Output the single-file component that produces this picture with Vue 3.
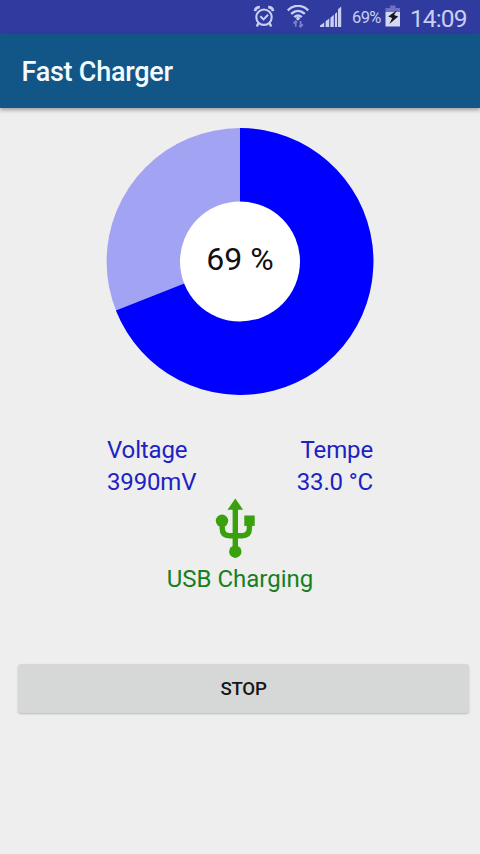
<script setup>
import { computed } from 'vue'

const level = 69
const radius = 133.4
const cx = 134
const cy = 134.5

const chargedPath = computed(() => {
  const angle = (level / 100) * Math.PI * 2
  const x = cx + radius * Math.sin(angle)
  const y = cy - radius * Math.cos(angle)
  const large = level > 50 ? 1 : 0
  return `M${cx} ${cy}V${cy - radius}A${radius} ${radius} 0 ${large} 1 ${x} ${y}Z`
})
</script>

<template>
  <div class="screen">
    <div class="status">
      <svg class="alarm" width="22" height="23" viewBox="0 0 22 23" fill="none" stroke="#c9cef3">
        <circle cx="11" cy="12.2" r="7.7" stroke-width="2.1" />
        <path d="M7.3 11.3l3.2 3.1 4.6-4.6" stroke-width="2" />
        <path d="M2 6.2C2.3 3.8 4 2.2 6.8 2.2M20 6.2C19.7 3.8 18 2.2 15.2 2.2" stroke-width="2.8" />
        <path d="M5.4 18.2l-1.6 3.4M16.6 18.2l1.6 3.4" stroke-width="2.4" />
      </svg>
      <svg class="wifi" width="24" height="25" viewBox="0 0 24 25" fill="none" stroke="#c9cef3">
        <path d="M1.8 5.4C7.8-.6 16.2-.6 22.2 5.4M5.2 8.9c4.2-4 9.4-4 13.6 0M8.3 12.2c2.4-2.2 5-2.2 7.4 0" stroke-width="2.4" />
        <circle cx="12" cy="13.6" r="1.8" fill="#c9cef3" stroke="none" />
        <path d="M9.7 21.8v-5.6M7.5 18.4l2.2-2.2 1.4 1.4M14.6 16v5.8M16.9 19.4l-2.3 2.4-1.4-1.5" stroke="#7e80d2" stroke-width="1.7" />
      </svg>
      <svg class="signal" width="22" height="22" viewBox="0 0 22 22" fill="#c9cef3">
        <path d="M0 21v-1.4l4.2-3V21zM5.6 21v-5.7l3.6-2.7V21zM10.4 21v-9.3l3.4-3V21zM14.9 21V7.9l2.2-2V21zM18 21V3.2L21.2.6V21z" />
      </svg>
      <span class="percent">{{ level }}%</span>
      <svg class="battery" width="16" height="22" viewBox="0 0 16 22">
        <path d="M5 .5h5.5V3H15v4H.5V3H5z" fill="#6d70c4" />
        <path d="M.5 7H15v14.5H.5z" fill="#d5d8f1" />
        <path d="M12 5.2L3.2 11.4l4 1.7L4.4 19l8.8-7.4-4.2-1.5z" fill="#15161f" />
      </svg>
      <span class="clock">14:09</span>
    </div>
    <header class="toolbar">Fast Charger</header>
    <main>
      <div class="chart">
        <svg width="268" height="269" viewBox="0 0 268 269">
          <circle :cx="cx" :cy="cy" :r="radius" fill="#a3a3f3" />
          <path :d="chargedPath" fill="#00f" />
          <circle :cx="cx" :cy="cy" r="60" fill="#fff" />
        </svg>
        <span class="level">{{ level }} %</span>
      </div>
      <div class="readings">
        <div>Voltage<br />3990mV</div>
        <div class="right">Tempe<br />33.0 °C</div>
      </div>
      <svg class="usb" width="42" height="60" viewBox="0 0 42 60" fill="#3aa00c">
        <path d="M8.2 23v7.2q0 7.5 7.5 7.5h12.2q7.5 0 7.5-7.5V23M21.3 8v44" fill="none" stroke="#3aa00c" stroke-width="5.4" />
        <path d="M21.3.5l7.8 11.3H13.5z" />
        <rect x="30.3" y="17.5" width="10.4" height="10.4" />
        <circle cx="8" cy="22.8" r="6.2" />
        <circle cx="21.3" cy="53.7" r="6.2" />
      </svg>
      <div class="source">USB Charging</div>
      <button class="stop" type="button">STOP</button>
    </main>
  </div>
</template>

<style>
body {
  margin: 0;
  background: #eee;
}
</style>

<style scoped>
.screen {
  height: 854px;
  display: flex;
  flex-direction: column;
  overflow: hidden;
  background: #eee;
  font-family: Roboto, "Liberation Sans", sans-serif;
}
.status {
  height: 34px;
  flex: none;
  box-sizing: border-box;
  padding: 5px 13px 0 0;
  display: flex;
  align-items: flex-start;
  justify-content: flex-end;
  background: #303b9f;
  color: #c9cef3;
  white-space: nowrap;
}
.wifi { margin-left: 11px; }
.signal { margin: 1px 0 0 10px; }
.percent {
  width: 31px;
  margin-left: 10px;
  font-size: 16.5px;
  letter-spacing: -0.6px;
  line-height: 26px;
}
.battery { margin-left: 2px; }
.clock {
  width: 57px;
  margin-left: 9px;
  font-size: 24.5px;
  letter-spacing: -0.9px;
  line-height: 28px;
}
.toolbar {
  height: 74px;
  flex: none;
  box-sizing: border-box;
  padding-left: 21.5px;
  background: #125688;
  color: #f2fbff;
  font-size: 27px;
  font-weight: 500;
  letter-spacing: -0.25px;
  line-height: 76px;
  box-shadow: 0 2px 4px rgba(0, 0, 0, 0.35);
}
main {
  display: flex;
  flex-direction: column;
  align-items: center;
  padding: 19px 11px 0 18px;
}
.chart {
  display: grid;
  place-items: center;
  width: 268px;
  height: 269px;
  margin-right: 7px;
}
.chart > * { grid-area: 1 / 1; }
.level {
  margin-top: -6px;
  color: #111;
  font-size: 32px;
  line-height: 38px;
}
.readings {
  width: 266px;
  margin: 38px 7px 0 0;
  display: flex;
  justify-content: space-between;
  color: #1c22c4;
  font-size: 24px;
  letter-spacing: -0.15px;
  line-height: 32px;
}
.right { text-align: right; }
.usb { margin-right: 17px; }
.source {
  margin: 5px 7px 0 0;
  color: #16801f;
  font-size: 24px;
  line-height: 32px;
}
.stop {
  align-self: stretch;
  height: 49px;
  margin: 69px 0 0;
  padding: 0;
  border: 0;
  border-radius: 3px;
  background: #d6d8d7;
  box-shadow: 0 1px 2px rgba(0, 0, 0, 0.22);
  color: #171717;
  font-family: inherit;
  font-size: 18.67px;
  font-weight: 500;
  letter-spacing: -0.25px;
}
</style>
